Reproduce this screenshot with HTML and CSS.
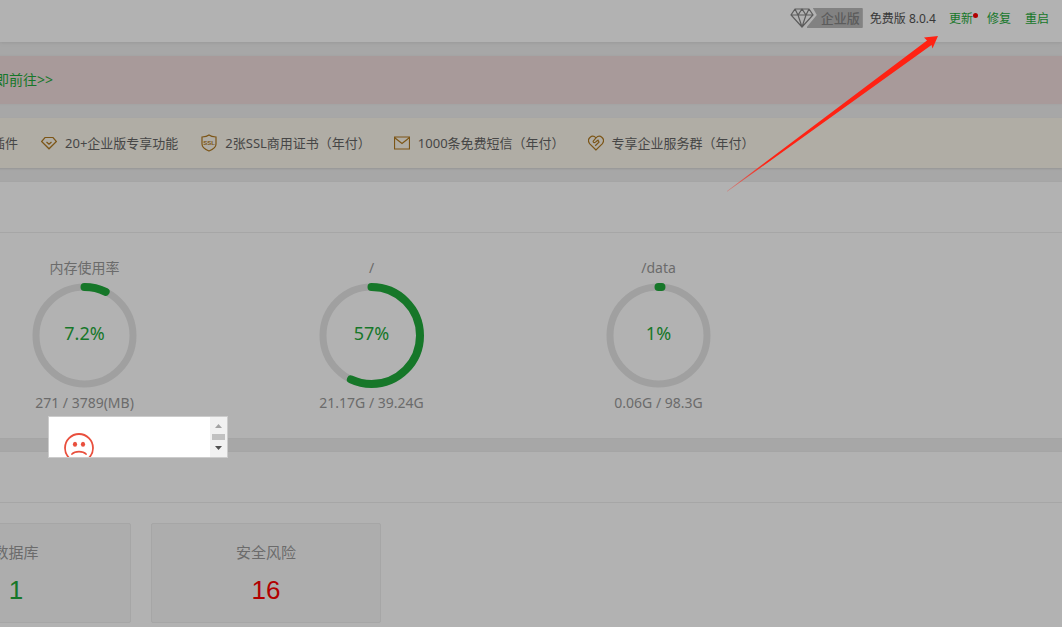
FILE: index.html
```html
<!DOCTYPE html>
<html lang="zh-CN">
<head>
<meta charset="utf-8">
<title>面板首页</title>
<link rel="stylesheet" href="styles.css">
</head>
<body>
<div class="page">
  <header class="topbar">
    <div class="edition">
      <svg class="edition-gem" viewBox="0 0 24 20" aria-hidden="true"><path d="M5 1H19L23 7L12 19L1 7ZM1 7H23M5 1L8 7L12 1L16 7L19 1M8 7L12 19L16 7"/></svg>
      <span class="edition-tag">企业版</span>
    </div>
    <span class="version">免费版 8.0.4</span>
    <nav class="actions">
      <a class="update" href="#">更新</a>
      <a href="#">修复</a>
      <a href="#">重启</a>
    </nav>
  </header>

  <main class="content">
    <section class="notice"><a href="#">即前往&gt;&gt;</a></section>

    <ul class="perks">
      <li>插件</li>
      <li><svg class="icon" viewBox="0 0 16 16" aria-hidden="true"><path d="M4 2.5H12L15.4 6.5L8 13.8L.6 6.5ZM5.5 7L8 9.3L10.5 7"/></svg>20+企业版专享功能</li>
      <li><svg class="icon ssl" viewBox="0 0 16 18" aria-hidden="true"><path d="M8 1C6 2.5 3.5 2.8 1 3V10C1 13.5 4 15.5 8 17C12 15.5 15 13.5 15 10V3C12.5 2.8 10 2.5 8 1Z"/><text x="8" y="11">SSL</text></svg>2张SSL商用证书（年付）</li>
      <li><svg class="icon" viewBox="0 0 16 16" aria-hidden="true"><path d="M.5 2H15.5V14H.5ZM1 3L8 8.5L15 3"/></svg>1000条免费短信（年付）</li>
      <li><svg class="icon" viewBox="0 0 16 16" aria-hidden="true"><path d="M8 15L1.8 8.8C-2 4 4-1.2 8 2.8C12-1.2 18 4 14.2 8.8ZM8 2.8L5.2 6.2C5 8 7 8.2 8.2 6.5L10 5.2L11 7.2L7.2 10.8"/></svg>专享企业服务群（年付）</li>
    </ul>

    <section class="panel">
      <div class="panel-head"></div>
      <div class="gauges">
        <div class="gauge">
          <div class="gauge-name">内存使用率</div>
          <div class="dial">
            <svg viewBox="0 0 105 105" aria-hidden="true"><circle class="track" cx="52.5" cy="52.5" r="48.5"/><circle class="arc" cx="52.5" cy="52.5" r="48.5" pathLength="100" stroke-dasharray="7.2 100"/></svg>
            <span>7.2%</span>
          </div>
          <div class="gauge-value">271 / 3789(MB)</div>
        </div>
        <div class="gauge">
          <div class="gauge-name">/</div>
          <div class="dial">
            <svg viewBox="0 0 105 105" aria-hidden="true"><circle class="track" cx="52.5" cy="52.5" r="48.5"/><circle class="arc" cx="52.5" cy="52.5" r="48.5" pathLength="100" stroke-dasharray="57 100"/></svg>
            <span>57%</span>
          </div>
          <div class="gauge-value">21.17G / 39.24G</div>
        </div>
        <div class="gauge">
          <div class="gauge-name">/data</div>
          <div class="dial">
            <svg viewBox="0 0 105 105" aria-hidden="true"><circle class="track" cx="52.5" cy="52.5" r="48.5"/><circle class="arc" cx="52.5" cy="52.5" r="48.5" pathLength="100" stroke-dasharray="1 100"/></svg>
            <span>1%</span>
          </div>
          <div class="gauge-value">0.06G / 98.3G</div>
        </div>
      </div>
    </section>

    <section class="panel overview">
      <div class="panel-head"></div>
      <div class="cards">
        <div class="card"><div class="card-name">数据库</div><div class="card-count">1</div></div>
        <div class="card"><div class="card-name">安全风险</div><div class="card-count risk">16</div></div>
      </div>
    </section>
  </main>

  <div class="dialog" role="dialog" aria-label="提示">
    <div class="dialog-body">
      <svg class="sad" viewBox="0 0 30 30" aria-hidden="true"><circle class="face" cx="15" cy="15" r="14"/><ellipse cx="11" cy="11.3" rx="2.1" ry="2.5"/><ellipse cx="19" cy="11.3" rx="2.1" ry="2.5"/><path d="M8 21C11 17.8 19 17.8 22 21"/></svg>
    </div>
    <div class="scroller">
      <svg viewBox="0 0 17 40" aria-hidden="true"><path fill="#a3a3a3" d="M5 11L8.5 7L12 11Z"/><path fill="#c1c1c1" d="M2 17H15V23H2Z"/><path fill="#505050" d="M5 29H12L8.5 33Z"/></svg>
    </div>
  </div>

  <svg class="pointer" viewBox="0 0 212 156" aria-hidden="true">
    <defs><linearGradient id="fade" gradientUnits="userSpaceOnUse" x1="0" y1="155" x2="40" y2="126"><stop offset="0" stop-color="#ff2213" stop-opacity=".3"/><stop offset="1" stop-color="#ff2213"/></linearGradient></defs>
    <path fill="url(#fade)" d="M0 155L200 4.500L197 1.500L211 0L205.500 12.500L204.500 9L0 155.800Z"/>
  </svg>
</div>
</body>
</html>
```

FILE: styles.css
```css
* { box-sizing: border-box; }

body {
  margin: 0;
  background: #a7a7a7;
  color: #464646;
  font: 13px/20px "Noto Sans", "Noto Sans CJK SC", sans-serif;
}

a { color: #167729; text-decoration: none; }

.page { position: relative; min-height: 100vh; overflow: hidden; display: flex; flex-direction: column; }

.topbar {
  display: flex;
  justify-content: flex-end;
  align-items: flex-start;
  height: 42px;
  padding: 8px 13px 0 0;
  background: #b2b2b2;
  box-shadow: 0 1px 3px #999;
  font-size: 12px;
  line-height: 22px;
}

.edition { display: flex; margin-right: 7px; line-height: 20px; }
.edition-gem { width: 24px; height: 20px; margin-right: -7px; z-index: 1; fill: none; stroke: #5c5c5c; stroke-width: 1.2; }
.edition-tag {
  width: 56px;
  height: 20px;
  padding-left: 14px;
  border-radius: 0 1px 1px 0;
  background: #828282;
  clip-path: polygon(6px 0, 10px 7px, 0 19px, 0 100%, 100% 100%, 100% 0);
  color: #5c5c5c;
  font-size: 13px;
  font-weight: 500;
}

.version { margin-right: 13px; color: #383838; }
.actions { display: flex; gap: 14px; }
.update { position: relative; }
.update::after {
  content: "";
  position: absolute;
  top: 5px;
  right: -5px;
  width: 5px;
  height: 5px;
  border-radius: 50%;
  background: #b20000;
}

.content { flex: 1; display: flex; flex-direction: column; gap: 14px; padding-top: 14px; }

.notice {
  padding: 14px 0;
  margin-left: -5px;
  background: #a89a9a;
  box-shadow: 0 0 2px #a0a0a0;
  font-size: 14px;
}

.perks {
  display: flex;
  align-items: center;
  gap: 23px;
  height: 50px;
  margin: 0 0 0 -8px;
  padding: 0;
  background: #b0ada5;
  box-shadow: 0 1px 2px #959595;
  list-style: none;
  white-space: nowrap;
}
.perks li { display: flex; align-items: center; gap: 8px; }
.icon { width: 16px; height: 16px; fill: none; stroke: #7c5516; stroke-width: 1.2; }
.ssl { height: 18px; }
.ssl text { fill: #7c5516; stroke: none; font: bold 6px "Liberation Sans", sans-serif; text-anchor: middle; }

.panel { background: #b2b2b2; box-shadow: 0 0 1px #a0a0a0; }
.panel-head { height: 51px; border-bottom: 1px solid #a6a6a6; }

.gauges {
  display: flex;
  margin-left: -59px;
  padding: 25px 0;
}
.gauge { display: flex; flex-direction: column; align-items: center; width: 287px; flex: none; color: #6b6b6b; font-size: 14px; }
.dial { display: grid; place-items: center; margin: 5px 0; }
.dial > * { grid-area: 1 / 1; }
.dial svg { width: 105px; height: 105px; fill: none; }
.dial span { padding-bottom: 5px; color: #167729; font-size: 18px; }
.track { stroke: #a0a0a0; stroke-width: 7; }
.arc { stroke: #167729; stroke-width: 8; stroke-linecap: round; transform: rotate(-90deg); transform-origin: center; }

.overview { flex: 1; }
.cards { display: flex; gap: 20px; margin-left: -99px; padding: 20px 0 4px; }
.card {
  width: 230px;
  height: 100px;
  padding: 18px 0;
  border: 1px solid #a6a6a6;
  border-radius: 2px;
  background: #adadad;
  text-align: center;
}
.card-name { color: #6b6b6b; font-size: 15px; }
.card-count { margin-top: 11px; color: #167729; font: 26px/34px "Liberation Sans", sans-serif; }
.risk { color: #b20000; }

.dialog {
  position: absolute;
  top: 416px;
  left: 48px;
  display: flex;
  width: 180px;
  height: 42px;
  border: 1px solid #ccc;
  background: #fff;
  overflow: hidden;
}
.dialog-body { flex: 1; padding: 16px 0 0 15px; overflow: hidden; }
.sad { display: block; width: 30px; height: 30px; fill: #e94f3d; }
.sad .face, .sad path { fill: none; stroke: #e94f3d; stroke-width: 1.8; stroke-linecap: round; }
.scroller { width: 17px; background: #f1f1f1; }
.scroller svg { display: block; width: 17px; height: 40px; }

.pointer { position: absolute; top: 36px; left: 727px; width: 212px; height: 156px; }
```
